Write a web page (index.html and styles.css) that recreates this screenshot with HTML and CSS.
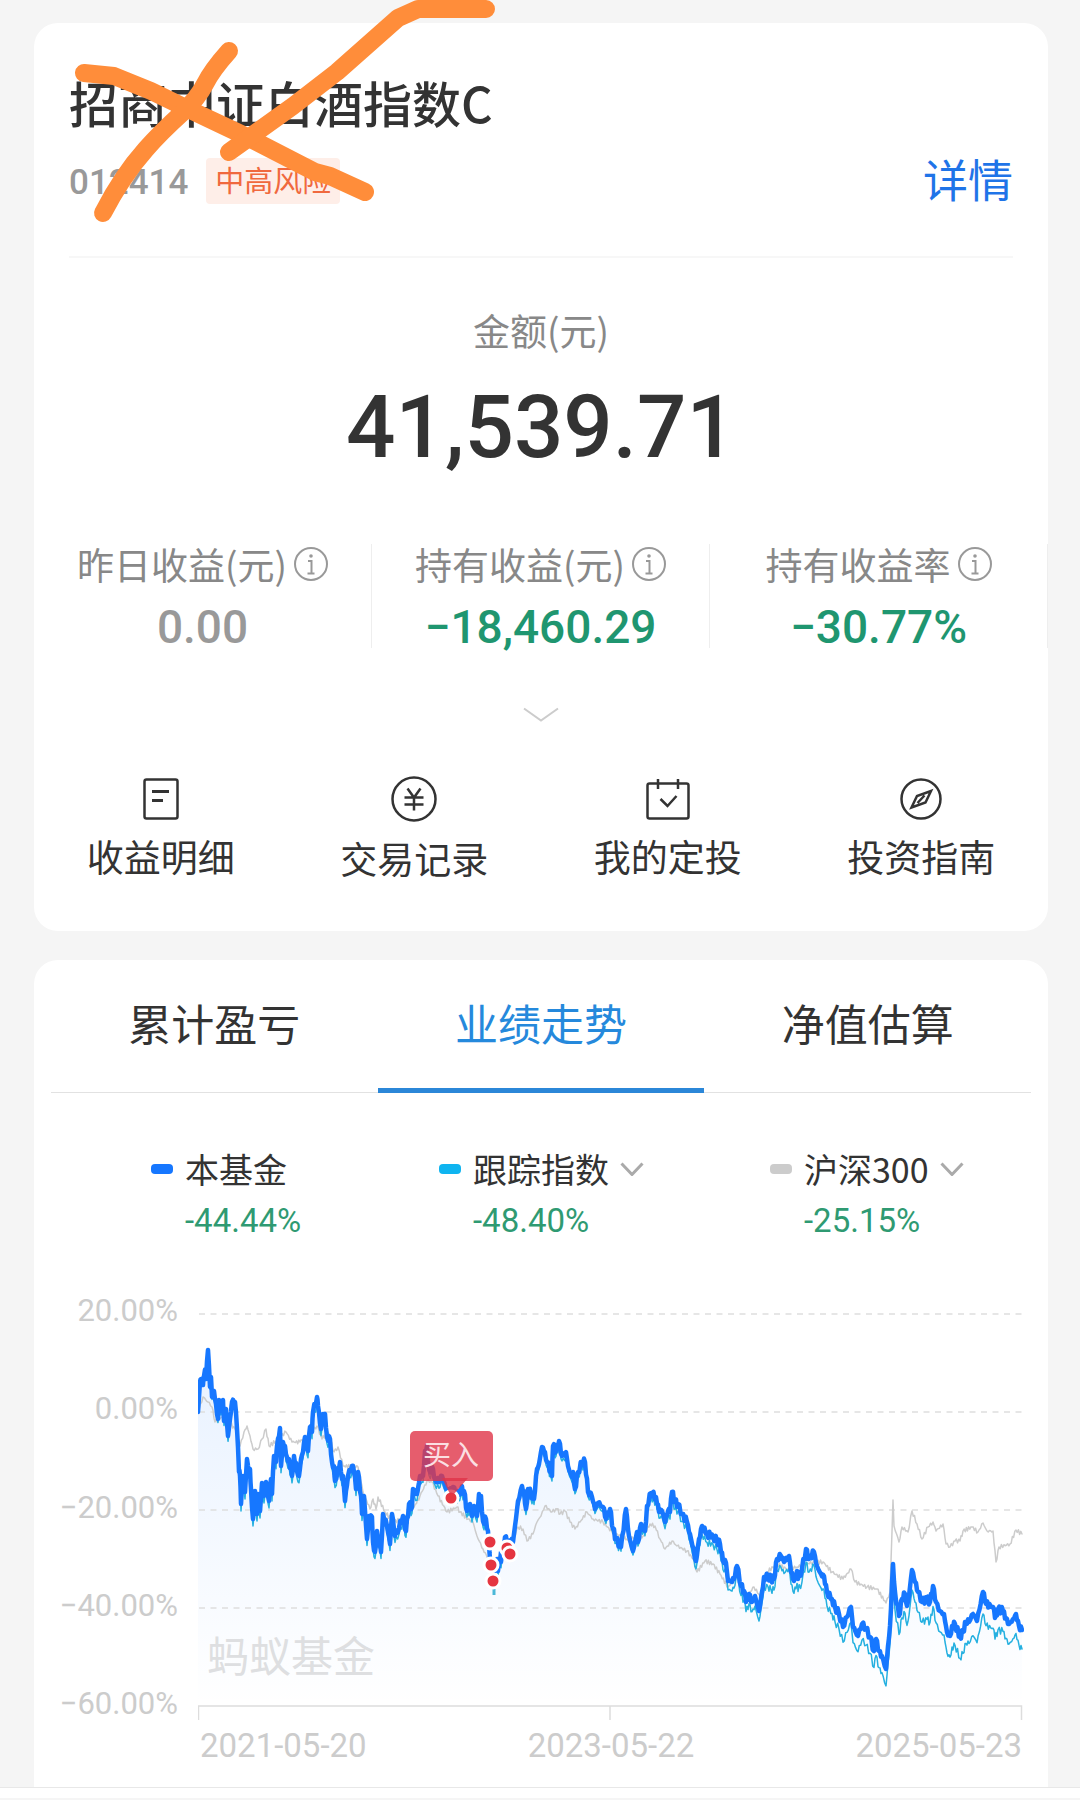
FILE: index.html
```html
<!DOCTYPE html>
<html lang="zh-CN">
<head>
<meta charset="utf-8">
<meta name="viewport" content="width=device-width, initial-scale=1">
<title>招商中证白酒指数C</title>
<link rel="stylesheet" href="styles.css">
</head>
<body>
<main class="page">
  <section class="card holding">
    <header class="fund">
      <h1 class="fund-name">招商中证白酒指数C</h1>
      <div class="fund-meta">
        <span class="fund-code">012414</span>
        <span class="risk-tag">中高风险</span>
        <a class="detail-link" href="#detail">详情</a>
      </div>
    </header>
    <div class="amount">
      <div class="amount-label">金额(元)</div>
      <div class="amount-value">41,539.71</div>
    </div>
    <div class="stats">
      <div class="stat">
        <div class="stat-label">昨日收益(元)
          <svg class="info" viewBox="0 0 34 34"><circle cx="17" cy="17" r="16"/><path d="M14 14h3.500v12M13.500 26.500h7"/><circle class="info-dot" cx="17" cy="9" r="1.800"/></svg>
        </div>
        <div class="stat-value">0.00</div>
      </div>
      <div class="stat">
        <div class="stat-label">持有收益(元)
          <svg class="info" viewBox="0 0 34 34"><circle cx="17" cy="17" r="16"/><path d="M14 14h3.500v12M13.500 26.500h7"/><circle class="info-dot" cx="17" cy="9" r="1.800"/></svg>
        </div>
        <div class="stat-value loss">−18,460.29</div>
      </div>
      <div class="stat">
        <div class="stat-label">持有收益率
          <svg class="info" viewBox="0 0 34 34"><circle cx="17" cy="17" r="16"/><path d="M14 14h3.500v12M13.500 26.500h7"/><circle class="info-dot" cx="17" cy="9" r="1.800"/></svg>
        </div>
        <div class="stat-value loss">−30.77%</div>
      </div>
    </div>
    <button class="expand" type="button" aria-label="展开">
      <svg width="38" height="16" viewBox="0 0 38 16"><path d="M2 1.500l17 12 17-12"/></svg>
    </button>
    <nav class="actions">
      <a class="action" href="#income">
        <svg width="36" height="42" viewBox="0 0 36 42"><rect x="1.500" y="1.500" width="33" height="39" rx="2"/><path d="M9 13.500h17M9 22.500h11" stroke-width="3"/></svg>
        <span>收益明细</span>
      </a>
      <a class="action" href="#trades">
        <svg width="46" height="46" viewBox="0 0 46 46"><circle cx="23" cy="23" r="21.500"/><path d="M16.500 12.500l6.500 9 6.500-9M13.500 21.500h19M13.500 28.500h19M23 21.500v13"/></svg>
        <span>交易记录</span>
      </a>
      <a class="action" href="#plan">
        <svg width="44" height="42" viewBox="0 0 44 42"><rect x="1.500" y="5.500" width="41" height="35" rx="2"/><path d="M12 1v10M32 1v10M14.500 21l7 7 9-10"/></svg>
        <span>我的定投</span>
      </a>
      <a class="action" href="#guide">
        <svg width="42" height="42" viewBox="0 0 42 42"><circle cx="21" cy="21" r="19.500"/><path d="M31 13l-5.500 11.500L11.500 29.500l5.500-11.500zM24.500 17.500l-7 7.500" stroke-width="2.500"/></svg>
        <span>投资指南</span>
      </a>
    </nav>
  </section>

  <section class="card trend">
    <div class="tabs" role="tablist">
      <button class="tab" type="button" role="tab" aria-selected="false">累计盈亏</button>
      <button class="tab active" type="button" role="tab" aria-selected="true">业绩走势</button>
      <button class="tab" type="button" role="tab" aria-selected="false">净值估算</button>
    </div>
    <div class="legend">
      <div class="series">
        <i class="swatch fund-swatch"></i>
        <span class="series-name">本基金</span>
        <span class="series-value">-44.44%</span>
      </div>
      <div class="series">
        <i class="swatch index-swatch"></i>
        <button class="series-name" type="button">跟踪指数<svg class="caret" viewBox="0 0 24 14"><path d="M1.500 1.500l10.500 11 10.500-11"/></svg></button>
        <span class="series-value">-48.40%</span>
      </div>
      <div class="series">
        <i class="swatch market-swatch"></i>
        <button class="series-name" type="button">沪深300<svg class="caret" viewBox="0 0 24 14"><path d="M1.500 1.500l10.500 11 10.500-11"/></svg></button>
        <span class="series-value">-25.15%</span>
      </div>
    </div>
    <div class="chart">
      <div class="y-axis">
        <span>20.00%</span>
        <span>0.00%</span>
        <span>−20.00%</span>
        <span>−40.00%</span>
        <span>−60.00%</span>
      </div>
      <svg class="plot" viewBox="0 -8 826 433" role="img" aria-label="业绩走势图">
        <defs>
          <linearGradient id="area-fill" x1="0" y1="50" x2="0" y2="407" gradientUnits="userSpaceOnUse">
            <stop offset="0" stop-color="#1677ff" stop-opacity="0.1"/>
            <stop offset="1" stop-color="#1677ff" stop-opacity="0"/>
          </linearGradient>
        </defs>
        <polygon id="area" fill="url(#area-fill)"/>
        <path class="grid" d="M1 15H824M1 113H824M1 211H824M1 309H824"/>
        <path class="axis" d="M0.500 421V407H823.500V421M412 407V421"/>
        <text class="watermark" x="9" y="373">蚂蚁基金</text>
        <polyline id="market" class="line market-line"/>
        <polyline id="index" class="line index-line"/>
        <polyline id="fund" class="line fund-line"/>
        <path class="index-dip" d="M296 290v6"/>
        <g class="trades">
          <circle cx="292" cy="243" r="7"/>
          <circle cx="293" cy="266" r="7"/>
          <circle cx="295" cy="282" r="7"/>
          <circle cx="309" cy="249" r="7"/>
          <circle cx="312" cy="255" r="7"/>
          <circle cx="253" cy="199" r="7"/>
        </g>
        <g class="tip">
          <path d="M244 179h26l-14 16h-4z"/>
          <rect x="212" y="132" width="83" height="50" rx="5"/>
          <text x="253" y="166">买入</text>
        </g>
      </svg>
      <div class="x-axis">
        <span>2021-05-20</span>
        <span>2023-05-22</span>
        <span>2025-05-23</span>
      </div>
    </div>
  </section>
  <svg class="scribble" width="520" height="240" viewBox="0 0 520 240" aria-hidden="true">
    <path d="M84 73L114 76 151 91 188 109 241 134 315 172 330 176 365 192"/>
    <path d="M229 51Q212 70 205 84T182 113Q160 133 146 149 122 176 103 213"/>
    <path d="M486 9H418L398 18 337 72 293 106 229 152"/>
  </svg>
</main>
<footer class="bottom-bar"></footer>
<script src="chart.js"></script>
</body>
</html>
```
FILE: styles.css
```css
* { box-sizing: border-box; }

body {
  margin: 0;
  background: #f5f5f5;
  color: #333;
  font-family: "Noto Sans CJK SC", sans-serif;
}

h1 { margin: 0; }
a { color: inherit; text-decoration: none; }
button { border: 0; padding: 0; background: none; color: inherit; font: inherit; cursor: pointer; }
svg { display: block; }

.page {
  position: relative;
  display: flex;
  flex-direction: column;
  gap: 29px;
  padding: 23px 32px 0 34px;
}

.card { background: #fff; border-radius: 24px; }

/* holding */
.holding { padding: 49px 0 51px; }

.fund {
  margin: 0 35px;
  padding-bottom: 52px;
  border-bottom: 2px solid #f7f7f7;
}
.fund-name { font-size: 49px; line-height: 60px; font-weight: 500; }
.fund-meta { display: flex; align-items: center; margin-top: 26px; height: 46px; }
.fund-code {
  padding-top: 2px;
  color: #999;
  font-family: Roboto, sans-serif;
  font-size: 35px;
  font-weight: 500;
}
.risk-tag {
  margin-left: 18px;
  padding: 0 9px 4px;
  border-radius: 4px;
  background: #feeee8;
  color: #f0693e;
  font-size: 29px;
  line-height: 42px;
}
.detail-link { margin-left: auto; padding-bottom: 4px; color: #1f74e8; font-size: 45px; line-height: 42px; }

.amount { margin-top: 47px; text-align: center; }
.amount-label { color: #888; font-size: 37px; line-height: 50px; }
.amount-value {
  margin-top: 22px;
  font-family: Roboto, sans-serif;
  font-size: 87px;
  font-weight: 500;
  line-height: 100px;
}

.stats { display: grid; grid-template-columns: repeat(3, 1fr); margin-top: 67px; }
.stat { border-right: 1px solid #eee; text-align: center; }
.stat-label {
  display: flex;
  justify-content: center;
  align-items: center;
  gap: 7px;
  padding-top: 2px;
  color: #888;
  font-size: 37px;
  line-height: 36px;
  white-space: nowrap;
}
.info { width: 34px; height: 34px; fill: none; stroke: #999; stroke-width: 2; }
.info .info-dot { fill: #999; stroke: none; }
.stat-value {
  margin-top: 24px;
  color: #999;
  font-family: Roboto, sans-serif;
  font-size: 46px;
  font-weight: 500;
  line-height: 42px;
}
.stat-value.loss { color: #1f9670; }

.expand { display: block; margin: 51px auto 45px; padding: 8px; height: 32px; }
.expand path { fill: none; stroke: #ccc; stroke-width: 2; }

.actions { display: grid; grid-template-columns: repeat(4, 1fr); align-items: center; }
.action {
  display: flex;
  flex-direction: column;
  align-items: center;
  gap: 14px;
  font-size: 37px;
  line-height: 44px;
}
.action svg { fill: none; stroke: #333; stroke-width: 2.5; }

/* trend */
.trend { padding-bottom: 23px; border-radius: 24px 24px 0 0; }

.tabs {
  display: grid;
  grid-template-columns: repeat(3, 1fr);
  margin: 0 17px;
  box-shadow: inset 0 -1px #e2e2e2;
}
.tab {
  padding: 32px 0 36px;
  border-bottom: 5px solid transparent;
  font-size: 43px;
  line-height: 60px;
}
.tab.active { border-color: #2b87d8; color: #2589dc; }

.legend {
  display: grid;
  grid-template-columns: 288fr 331fr 261fr;
  margin: 54px 17px 0;
  padding-left: 100px;
}
.series {
  display: grid;
  grid-template-columns: 22px auto;
  justify-content: start;
  align-items: center;
  gap: 10px 12px;
}
.swatch { height: 10px; border-radius: 4px; }
.fund-swatch { background: #1677ff; }
.index-swatch { background: #0fb4f0; }
.market-swatch { background: #ccc; }
.series-name { display: flex; align-items: center; gap: 11px; font-size: 34px; line-height: 44px; }
.caret { width: 24px; height: 14px; fill: none; stroke: #aaa; stroke-width: 3; }
.series-value {
  grid-column: 2;
  color: #2f9a72;
  font-family: Roboto, sans-serif;
  font-size: 33px;
  line-height: 40px;
}

.chart {
  display: grid;
  grid-template-columns: 144px 1fr;
  column-gap: 20px;
  margin-top: 50px;
  padding-right: 24px;
  color: #ccc;
  font-family: Roboto, sans-serif;
}
.y-axis {
  display: flex;
  flex-direction: column;
  justify-content: space-between;
  text-align: right;
  font-size: 31px;
  line-height: 40px;
}
.plot { width: 100%; height: auto; }
.x-axis {
  grid-column: 2;
  display: flex;
  justify-content: space-between;
  margin-top: 4px;
  padding: 0 2px;
  font-size: 33px;
  line-height: 36px;
}

.grid { fill: none; stroke: #dedede; stroke-width: 1.5; stroke-dasharray: 6 5.5; }
.axis { fill: none; stroke: #ddd; stroke-width: 1.5; }
.watermark { fill: #dedfe1; font-family: "Noto Sans CJK SC", sans-serif; font-size: 42px; }
.line { fill: none; stroke-linejoin: round; stroke-linecap: round; }
.market-line { stroke: #ccc; stroke-width: 1.5; }
.index-line { stroke: #25b0e0; stroke-width: 1.5; }
.index-dip { stroke: #4bb8d8; stroke-width: 3; }
.fund-line { stroke: #1677ff; stroke-width: 4.5; }
.trades circle { fill: #e53540; stroke: #fff; stroke-width: 3; }
.tip path, .tip rect { fill: #e03448; fill-opacity: 0.8; }
.tip text {
  fill: #fbdfe2;
  font-family: "Noto Sans CJK SC", sans-serif;
  font-size: 28px;
  text-anchor: middle;
}

.scribble { position: absolute; top: 0; left: 0; pointer-events: none; }
.scribble path {
  fill: none;
  stroke: #ff8d3a;
  stroke-width: 18;
  stroke-linecap: round;
  stroke-linejoin: round;
}

.bottom-bar { height: 11px; border-top: 1px solid #e8e8e8; background: #fff; }
```
FILE: chart.js
```js
// Series points as x,y pairs in the plot's own units (98 units = 20%).
const fund = `0,113 2,83 3,80 5,86 6,77 8,71 8,80 10,51 12,88 13,78 14,98 16,92 18,105 20,120 21,101 23,112 25,101 26,122 28,110 30,137 33,113 34,103 37,103 39,130 41,173 42,177 43,205 45,177 47,193 49,160 51,172 52,170 53,190 55,220 57,192 59,215 60,195 62,212 64,184 66,197 68,183 71,202 73,180 74,195 76,157 78,163 79,147 82,129 83,167 85,143 87,147 89,158 91,160 94,177 96,157 99,172 101,177 103,160 105,153 107,138 110,152 112,128 114,133 115,113 119,98 120,107 123,130 125,115 127,115 129,138 132,140 134,163 136,167 137,182 142,163 144,180 145,177 147,202 150,177 154,167 156,173 158,190 160,173 163,197 164,215 166,197 169,240 171,217 174,218 175,243 177,253 179,232 183,253 185,215 189,227 192,245 194,215 197,237 201,229 205,217 208,232 211,205 214,208 215,190 219,195 222,177 225,177 227,152 229,147 231,170 235,170 237,180 241,183 244,177 248,190 251,193 255,188 259,198 263,190 266,192 269,212 272,205 274,217 276,207 279,217 281,195 283,197 285,222 288,220 290,232 291,243 292,260 294,267 295,282 297,270 299,260 300,272 303,253 303,263 307,238 310,243 315,243 317,227 320,202 324,187 326,192 328,210 330,190 333,195 336,200 339,170 341,165 344,148 346,152 349,163 354,177 355,147 358,152 361,142 364,157 368,153 370,167 374,178 375,173 377,190 380,173 384,163 387,163 390,193 394,198 397,210 400,204 405,208 408,220 412,210 415,230 418,240 423,248 428,210 431,237 435,252 439,233 440,243 443,225 447,232 449,207 453,194 458,198 461,213 464,212 467,223 470,212 472,213 474,193 477,203 480,205 484,215 489,223 492,235 498,262 501,240 504,227 509,235 515,237 519,242 522,245 525,262 528,264 530,282 534,283 537,277 539,267 543,287 546,292 548,303 551,295 554,303 557,297 561,312 564,293 566,278 570,277 573,280 576,280 579,260 583,257 586,263 591,257 593,273 596,282 599,272 600,280 604,270 608,250 611,260 616,253 619,267 623,275 626,277 629,293 634,300 637,308 641,315 645,328 649,318 653,308 655,328 660,337 664,325 668,330 672,338 676,352 678,340 681,352 684,357 688,370 690,347 692,327 695,265 697,293 701,317 704,300 707,295 709,307 711,297 714,271 717,283 720,293 724,303 729,300 732,303 735,287 738,303 742,312 746,315 749,333 752,337 754,327 757,325 762,338 765,333 768,323 771,323 775,315 779,322 785,293 788,305 795,308 797,319 800,310 805,312 808,319 811,325 815,320 818,315 821,327 824,331`;

const market = `0,113 5,98 10,103 14,108 17,123 24,118 30,122 37,130 42,147 46,133 49,127 52,137 55,150 60,150 64,140 68,130 71,147 78,142 82,138 88,133 94,143 102,143 109,137 119,127 124,140 130,133 136,153 140,148 145,167 160,168 165,193 172,210 175,200 178,210 180,198 187,213 195,223 205,220 215,210 222,197 229,182 234,183 240,197 249,213 259,208 262,213 270,220 275,223 279,237 285,250 294,267 304,253 314,243 320,228 325,230 329,242 335,235 339,223 343,217 347,207 354,213 359,210 362,215 367,212 372,223 377,230 382,223 389,213 395,220 405,223 414,233 429,240 445,237 452,225 457,227 462,240 467,250 474,242 479,247 489,252 495,260 499,273 507,262 515,265 522,275 530,288 539,277 549,297 556,288 562,297 569,273 579,265 589,270 599,268 615,263 625,263 634,273 645,280 653,270 657,283 669,288 679,290 688,304 692,293 695,201 696,227 701,243 704,228 710,233 714,212 719,225 724,240 730,228 735,223 738,232 745,225 748,245 752,248 757,242 762,242 765,232 774,228 780,233 785,224 789,232 795,232 798,263 801,248 812,245 818,231 824,235`;

// How far the tracked index sits below the fund along the x axis.
const gap = [[0, 0], [40, 7], [290, 6], [440, 4], [470, 7], [560, 10], [640, 15], [690, 17], [714, 20], [785, 22], [824, 19]];

const parse = (text) => text.trim().split(/\s+/).map((pair) => pair.split(",").map(Number));

// Adds small daily swings between the recorded points.
function daily(points, size) {
  const out = [points[0]];
  for (let i = 1; i < points.length; i++) {
    const [x0, y0] = points[i - 1];
    const [x1, y1] = points[i];
    const steps = Math.max(2, Math.round((x1 - x0) / 1.2));
    for (let s = 1; s < steps; s++) {
      const t = s / steps;
      const swing = Math.sin(i * 12.9 + s * 78.2) * size;
      out.push([x0 + (x1 - x0) * t, y0 + (y1 - y0) * t + swing]);
    }
    out.push([x1, y1]);
  }
  return out;
}

function gapAt(x) {
  for (let i = 1; i < gap.length; i++) {
    if (x <= gap[i][0]) {
      const [x0, g0] = gap[i - 1];
      const [x1, g1] = gap[i];
      return g0 + ((g1 - g0) * (x - x0)) / (x1 - x0);
    }
  }
  return gap[gap.length - 1][1];
}

const join = (points) => points.map(([x, y]) => `${x.toFixed(1)},${y.toFixed(1)}`).join(" ");
const draw = (id, points) => document.getElementById(id).setAttribute("points", join(points));

const fundLine = daily(parse(fund), 3.5);
draw("fund", fundLine);
draw("index", fundLine.map(([x, y]) => [x, y + gapAt(x)]));
draw("market", daily(parse(market), 2));
draw("area", [[0, 407], ...fundLine, [824, 407]]);
```
